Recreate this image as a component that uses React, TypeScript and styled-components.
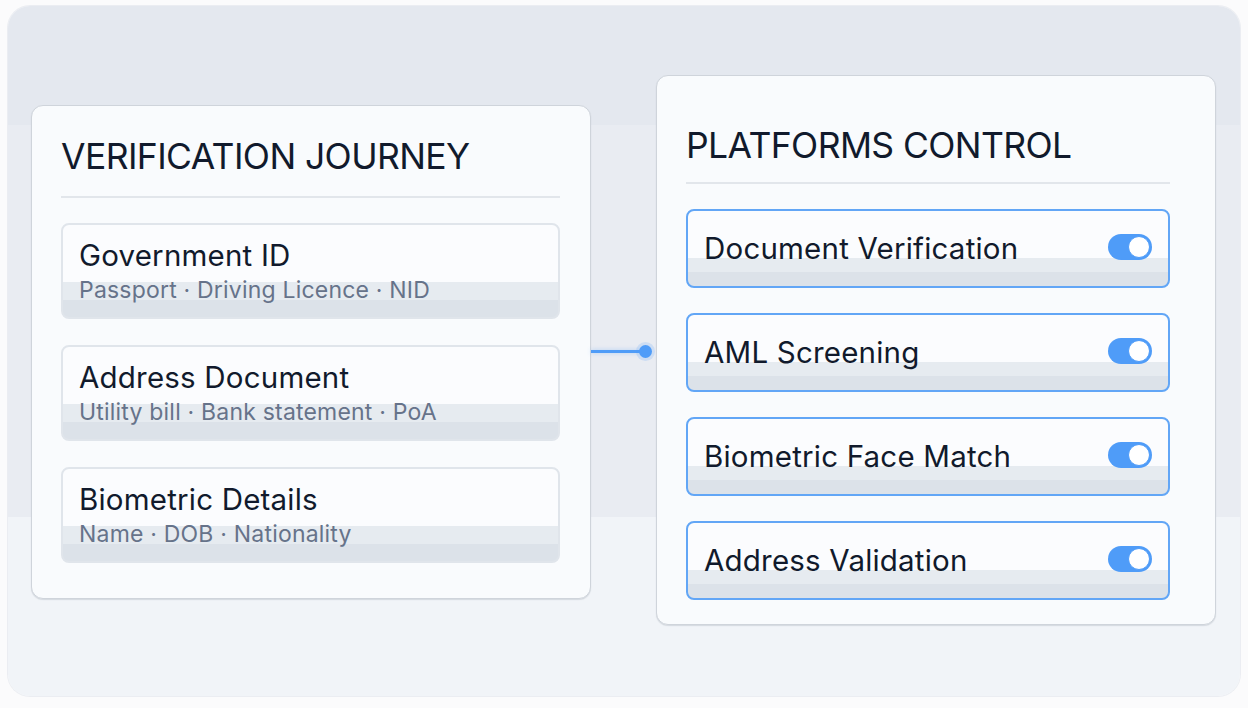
import React from "react";
import styled, { createGlobalStyle } from "styled-components";

const Global = createGlobalStyle`
  html, body { margin: 0; padding: 0; background: #fbfbfc; }
  body { font-family: Inter, "Noto Sans", "Liberation Sans", sans-serif; }
  #root { width: 1248px; height: 708px; }
`;

const Page = styled.div`
  width: 1248px;
  height: 708px;
  padding: 6px 8px 12px 8px;
  box-sizing: border-box;
`;

const Stage = styled.div`
  height: 100%;
  border-radius: 22px;
  background: linear-gradient(
    #e4e8ef 0 17.3%,
    #e9ecf2 17.3% 74%,
    #f1f4f8 74% 100%
  );
  box-shadow: 0 0 0 1px rgba(225, 229, 235, 0.6);
  display: flex;
  align-items: center;
  padding: 0 24px 0 23px;
  box-sizing: border-box;
`;

const Panel = styled.section<{ $tall?: boolean }>`
  width: 560px;
  box-sizing: border-box;
  background: #f9fbfd;
  border: 1px solid #cfd4db;
  border-radius: 12px;
  box-shadow: 0 1px 1px rgba(160, 168, 180, 0.35);
  padding: ${(p) => (p.$tall ? "49px 45px 24px 29px" : "30px 30px 35px 29px")};
  display: flex;
  flex-direction: column;
  margin-top: ${(p) => (p.$tall ? "-2px" : "2px")};
`;

const Title = styled.h2<{ $tall?: boolean }>`
  margin: 0;
  font-size: 35.5px;
  font-weight: 400;
  letter-spacing: -0.6px;
  color: #111a2c;
  line-height: 1.2;
  padding-bottom: ${(p) => (p.$tall ? "15px" : "17px")};
  border-bottom: 2px solid #e2e6eb;
`;

const List = styled.div<{ $gap: number; $top: number }>`
  display: flex;
  flex-direction: column;
  gap: ${(p) => p.$gap}px;
  margin-top: ${(p) => p.$top}px;
`;

const band = `linear-gradient(#fbfcfe 0 62.5%, #e6ebf0 62.5% 82%, #dce2e9 82% 100%)`;

const JourneyItem = styled.div`
  height: 96px;
  flex: none;
  box-sizing: border-box;
  border: 2px solid #e0e5eb;
  border-radius: 8px;
  background: ${band};
  padding: 12px 17px 0 16px;
  display: flex;
  flex-direction: column;
`;

const ItemTitle = styled.div`
  font-size: 29.5px;
  line-height: 36px;
  color: #111a2c;
  letter-spacing: 0.2px;
`;

const ItemSub = styled.div`
  font-size: 23px;
  line-height: 28px;
  color: #66738a;
  letter-spacing: 0.2px;
  margin-top: 3px;
`;

const ControlItem = styled.div`
  height: 79px;
  flex: none;
  box-sizing: border-box;
  border: 2px solid #62a6f6;
  border-radius: 8px;
  background: ${band};
  padding: 0 16px 0 16px;
  display: flex;
  align-items: center;
  justify-content: space-between;
`;

const ControlLabel = styled.div`
  font-size: 29.5px;
  line-height: 36px;
  color: #111a2c;
  letter-spacing: 0.2px;
  margin-top: -2px;
`;

const Toggle = styled.div`
  width: 44px;
  height: 26px;
  border-radius: 13px;
  background: #4f9cf8;
  display: flex;
  align-items: center;
  justify-content: flex-end;
  padding: 0 2px;
  box-sizing: border-box;
  margin-top: -4px;
`;

const Knob = styled.div`
  width: 22px;
  height: 22px;
  border-radius: 50%;
  background: #ffffff;
  box-sizing: border-box;
  border: 1px solid #4f9cf8;
`;

const Connector = styled.div`
  width: 65px;
  flex: none;
  display: flex;
  align-items: center;
  margin-top: 1px;
`;

const Line = styled.div`
  width: 50px;
  height: 3px;
  background: #4f9cf8;
  box-shadow: 0 0 4px rgba(79, 156, 248, 0.35);
`;

const Dot = styled.div`
  width: 13px;
  height: 13px;
  border-radius: 50%;
  background: #4f9cf8;
  margin-left: -2px;
  box-shadow: 0 0 0 3px rgba(79, 156, 248, 0.18);
`;

const journey = [
  { title: "Government ID", sub: "Passport · Driving Licence · NID" },
  { title: "Address Document", sub: "Utility bill · Bank statement · PoA" },
  { title: "Biometric Details", sub: "Name · DOB · Nationality" },
];

const controls = [
  "Document Verification",
  "AML Screening",
  "Biometric Face Match",
  "Address Validation",
];

export default function App() {
  return (
    <>
      <Global />
      <Page>
        <Stage>
          <Panel>
            <Title>VERIFICATION JOURNEY</Title>
            <List $gap={26} $top={25}>
              {journey.map((j) => (
                <JourneyItem key={j.title}>
                  <ItemTitle>{j.title}</ItemTitle>
                  <ItemSub>{j.sub}</ItemSub>
                </JourneyItem>
              ))}
            </List>
          </Panel>
          <Connector>
            <Line />
            <Dot />
          </Connector>
          <Panel $tall>
            <Title $tall>PLATFORMS CONTROL</Title>
            <List $gap={25} $top={25}>
              {controls.map((c) => (
                <ControlItem key={c}>
                  <ControlLabel>{c}</ControlLabel>
                  <Toggle>
                    <Knob />
                  </Toggle>
                </ControlItem>
              ))}
            </List>
          </Panel>
        </Stage>
      </Page>
    </>
  );
}
